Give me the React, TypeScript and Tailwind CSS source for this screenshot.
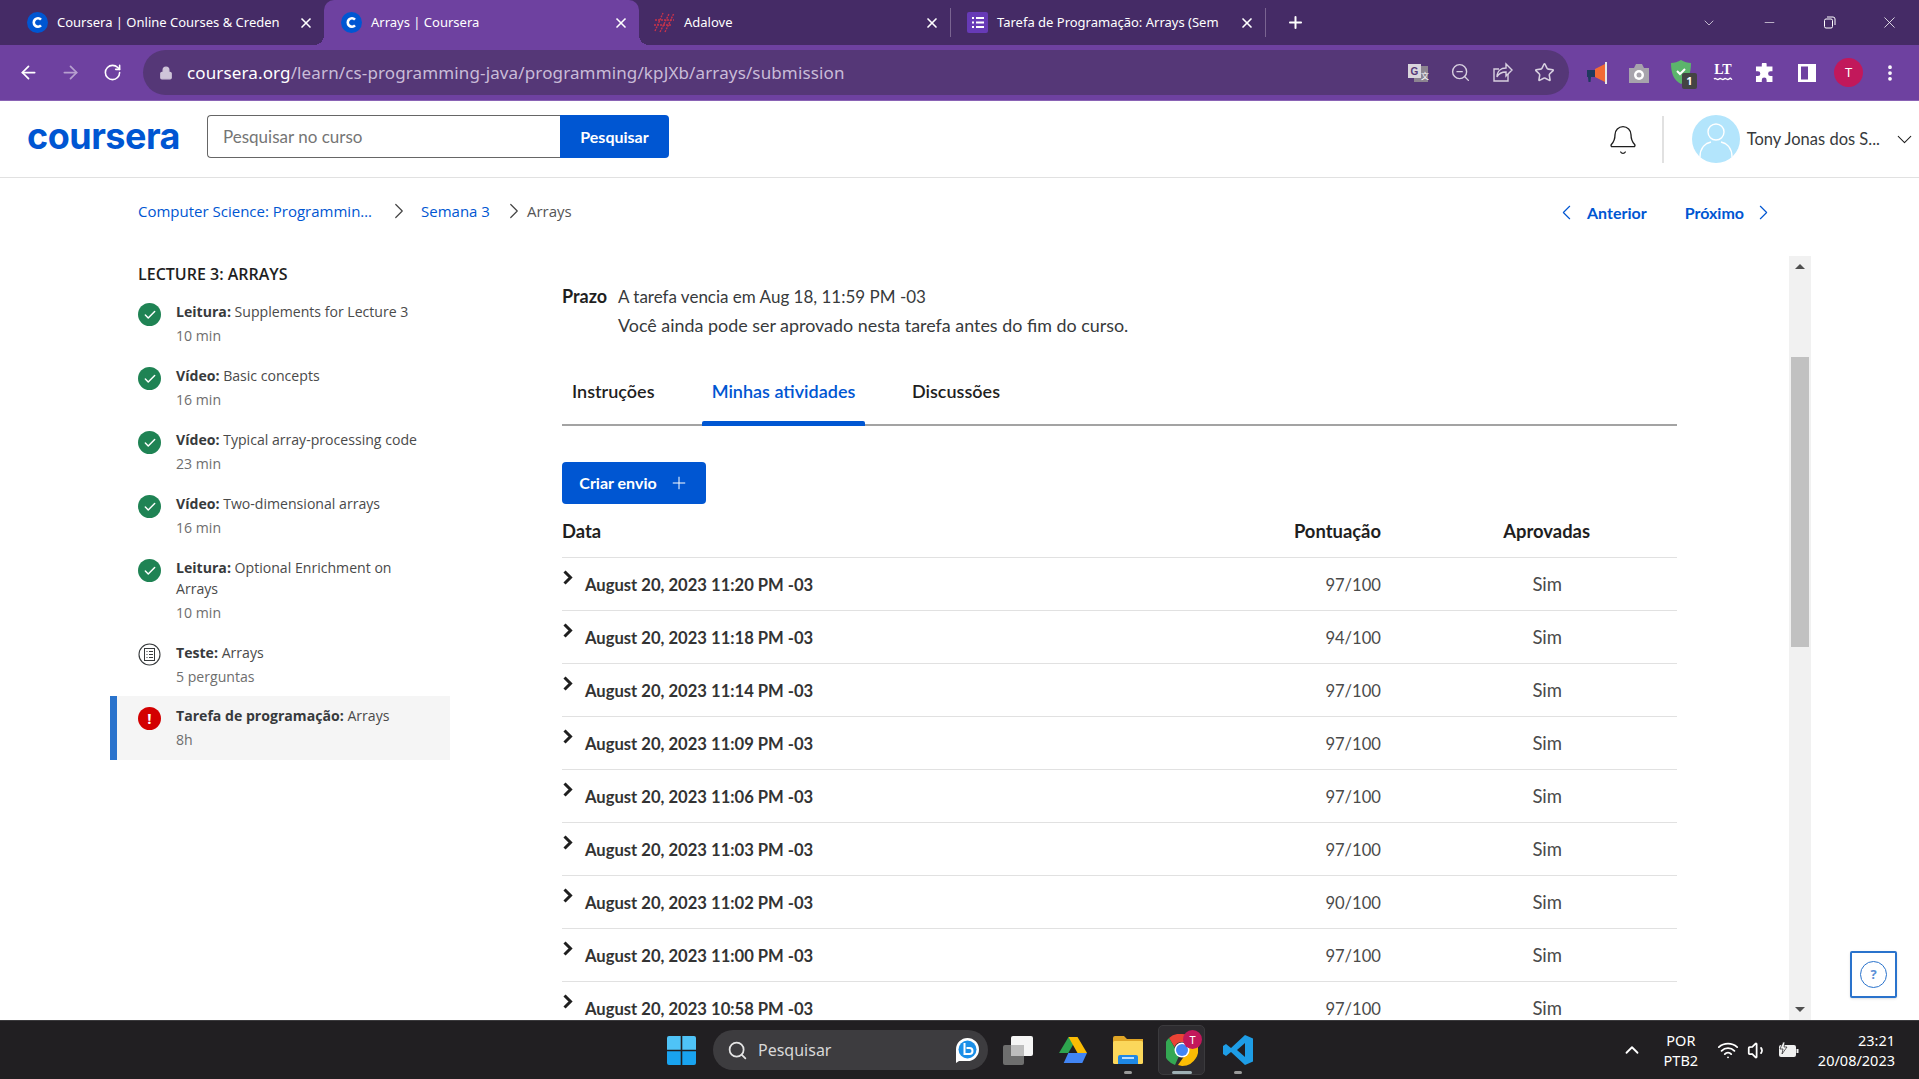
import {
  ArrowLeft,
  ArrowRight,
  Bell,
  Check,
  ChevronDown,
  ChevronLeft,
  ChevronRight,
  ChevronUp,
  EllipsisVertical,
  Lock,
  Minus,
  Plus,
  RotateCw,
  Search,
  Star,
  Volume1,
  Wifi,
  X,
  ZoomOut,
} from "lucide-react";

const chromeFont = "font-['Noto_Sans',sans-serif]";
const bodyFont = "font-['Lato',sans-serif]";
const navFont = "font-['Open_Sans',sans-serif]";

const tabs = [
  { title: "Coursera | Online Courses & Creden", w: "w-[324px] pl-[27px]", icon: "c" },
  { title: "Arrays | Coursera", w: "w-[315px] pl-[17px]", icon: "c", active: true },
  { title: "Adalove", w: "w-[312px] pl-[15px]", icon: "a" },
  { title: "Tarefa de Programação: Arrays (Sem", w: "w-[315px] pl-[16px]", icon: "f" },
];

const lessons = [
  { kind: "Leitura:", name: "Supplements for Lecture 3", meta: "10 min", status: "done" },
  { kind: "Vídeo:", name: "Basic concepts", meta: "16 min", status: "done" },
  { kind: "Vídeo:", name: "Typical array-processing code", meta: "23 min", status: "done" },
  { kind: "Vídeo:", name: "Two-dimensional arrays", meta: "16 min", status: "done" },
  { kind: "Leitura:", name: "Optional Enrichment on Arrays", meta: "10 min", status: "done" },
  { kind: "Teste:", name: "Arrays", meta: "5 perguntas", status: "quiz" },
  { kind: "Tarefa de programação:", name: "Arrays", meta: "8h", status: "error" },
];

const submissions = [
  { date: "August 20, 2023 11:20 PM -03", score: "97/100" },
  { date: "August 20, 2023 11:18 PM -03", score: "94/100" },
  { date: "August 20, 2023 11:14 PM -03", score: "97/100" },
  { date: "August 20, 2023 11:09 PM -03", score: "97/100" },
  { date: "August 20, 2023 11:06 PM -03", score: "97/100" },
  { date: "August 20, 2023 11:03 PM -03", score: "97/100" },
  { date: "August 20, 2023 11:02 PM -03", score: "90/100" },
  { date: "August 20, 2023 11:00 PM -03", score: "97/100" },
  { date: "August 20, 2023 10:58 PM -03", score: "97/100" },
];

function Favicon({ icon }: { icon: string }) {
  if (icon === "c") {
    return (
      <svg width="21" height="21" viewBox="0 0 21 21" className="shrink-0">
        <circle cx="10.5" cy="10.5" r="10.5" fill="#0056d2" />
        <path d="M14 7.6a4.2 4.2 0 1 0 0 5.8" fill="none" stroke="#fff" strokeWidth="2.6" />
      </svg>
    );
  }
  if (icon === "a") {
    return (
      <svg width="21" height="21" viewBox="0 0 21 21" className="shrink-0" stroke="#c9334a" strokeWidth="1.4" strokeDasharray="2 1">
        <path d="M1 19 9 1M6 20 15 2M11 20 20 1M1 8h19M0 13h18" fill="none" />
      </svg>
    );
  }
  return (
    <svg width="21" height="21" viewBox="0 0 21 21" className="shrink-0">
      <rect width="21" height="21" rx="2" fill="#673ab7" />
      <path d="M5 6h2M9 6h8M5 10.5h2M9 10.5h8M5 15h2M9 15h8" stroke="#fff" strokeWidth="2" />
    </svg>
  );
}

function BrowserTabs() {
  return (
    <div className={`flex h-[45px] shrink-0 bg-[#452b66] text-white text-[13px] ${chromeFont}`}>
      {tabs.map((tab, i) => (
        <div
          key={tab.title}
          className={`relative ${tab.w} flex items-center pr-[10px] gap-[9px] ${tab.active ? "bg-[#6e41a0] rounded-t-[10px]" : ""} ${i >= 2 ? "border-r border-[#7a6491] my-[8px] h-[29px]" : ""}`}
        >
          {tab.active && (
            <>
              <div className="absolute -left-[10px] bottom-0 w-[10px] h-[10px] bg-[radial-gradient(circle_at_0_0,transparent_10px,#6e41a0_10px)]" />
              <div className="absolute -right-[10px] bottom-0 w-[10px] h-[10px] bg-[radial-gradient(circle_at_100%_0,transparent_10px,#6e41a0_10px)]" />
            </>
          )}
          <Favicon icon={tab.icon} />
          <span className="flex-1 min-w-0 whitespace-nowrap">{tab.title}</span>
          <X size={16} strokeWidth={2.5} className="shrink-0" />
        </div>
      ))}
      <div className="flex items-center ml-[20px]">
        <Plus size={19} strokeWidth={2.5} />
      </div>
      <div className="ml-auto flex items-center">
        <div className="w-[60px] flex justify-center"><ChevronDown size={16} strokeWidth={1} /></div>
        <div className="w-[60px] flex justify-center"><Minus size={15} strokeWidth={1} /></div>
        <div className="w-[60px] flex justify-center">
          <svg width="13" height="13" viewBox="0 0 13 13" fill="none" stroke="#fff">
            <rect x="1.5" y="3" width="8" height="9" rx="1.5" />
            <path d="M4 1h6a2 2 0 0 1 2 2v6" />
          </svg>
        </div>
        <div className="w-[60px] flex justify-center"><X size={19} strokeWidth={1} /></div>
      </div>
    </div>
  );
}

function Toolbar() {
  return (
    <div className={`flex items-center h-[56px] shrink-0 bg-[#6e41a0] border-b border-[#8a63b5] text-white ${chromeFont}`}>
      <div className="flex items-center w-[143px] pl-[18px] gap-[22px]">
        <ArrowLeft size={21} />
        <ArrowRight size={21} className="opacity-50 -ml-[1px]" />
        <RotateCw size={19} />
      </div>
      <div className="flex items-center w-[1426px] h-[45px] rounded-full bg-[#553777] pl-[16px] pr-[14px]">
        <Lock size={14} fill="#cfc5d9" stroke="#cfc5d9" className="shrink-0" />
        <span className="ml-[14px] text-[17px] tracking-[0.13px] whitespace-nowrap">
          coursera.org<span className="text-[#c9bcd8]">/learn/cs-programming-java/programming/kpJXb/arrays/submission</span>
        </span>
        <div className="ml-auto flex items-center gap-[21px] text-[#d8d0e0]">
          <svg width="22" height="22" viewBox="0 0 22 22" className="shrink-0">
            <rect x="7" y="4" width="14" height="16" fill="#8c8490" />
            <rect x="1" y="2" width="13" height="14" fill="#d9d5dc" />
            <text x="3.5" y="13" fontSize="10" fontWeight="700" fill="#553777" fontFamily="'Liberation Sans',sans-serif">G</text>
            <text x="14" y="17" fontSize="8" fill="#fff" fontFamily="'Noto Sans CJK SC',sans-serif">文</text>
          </svg>
          <ZoomOut size={21} strokeWidth={1.6} />
          <svg width="21" height="21" viewBox="0 0 21 21" fill="none" stroke="currentColor" strokeWidth="1.4">
            <path d="M16 12v7H2V7h5" />
            <path d="M5 15c0-6 4-9 9-9V2l6 6-6 6v-4c-4 0-7 1-9 5z" />
          </svg>
          <Star size={21} strokeWidth={1.8} />
        </div>
      </div>
      <div className="relative flex-1 self-stretch flex items-center">
        <svg width="24" height="24" viewBox="0 0 24 24" className="ml-[16px]">
          <path d="M2 9h8v7H6l-.5 5H3.5L3 16H2z" fill="#1f3a5f" />
          <path d="M10 8l10-5v18l-10-5z" fill="#f26a35" />
          <rect x="20" y="1" width="2" height="22" fill="#e6e6e6" />
        </svg>
        <svg width="24" height="22" viewBox="0 0 24 22" className="ml-[18px]">
          <path d="M2 6h5l2-4h6l2 4h5v15H2z" fill="#a7a4ac" />
          <circle cx="12" cy="13" r="5" fill="#fff" />
          <circle cx="12" cy="13" r="2.5" fill="#a7a4ac" />
        </svg>
        <div className="relative w-[24px] h-[28px] ml-[19px]">
          <svg width="22" height="26" viewBox="0 0 22 26">
            <path d="M11 1c3 2 7 3 10 3 0 9-2 17-10 21C3 21 1 13 1 4c3 0 7-1 10-3z" fill="#5cb46c" />
            <path d="M7 12l3 3 5-5" fill="none" stroke="#fff" strokeWidth="2" />
          </svg>
          <span className="absolute left-[12px] top-[14px] w-[15px] h-[16px] rounded-[2px] bg-[#444] text-[11px] leading-[16px] font-bold text-center">1</span>
        </div>
        <div className="flex flex-col items-center leading-none ml-[19px] w-[20px]">
          <span className="text-[14px] font-bold font-['Liberation_Serif',serif] leading-[14px]">LT</span>
          <svg width="20" height="5" viewBox="0 0 20 5" fill="none" stroke="#fff" strokeWidth="1.5">
            <path d="M1 2c2-2 3 2 5 0s3 2 5 0 3 2 5 0 2 1 3 0" />
          </svg>
        </div>
        <svg width="20" height="20" viewBox="0 0 20 20" fill="#fff" className="ml-[22px]">
          <path d="M7 1a2.5 2.5 0 0 1 5 0v2h6v5h-2a2.5 2.5 0 0 0 0 5h2v6h-6v-2a2.5 2.5 0 0 0-5 0v2H1v-6h2a2.5 2.5 0 0 0 0-5H1V3h6z" transform="translate(0 .5) scale(.97)" />
        </svg>
        <svg width="18" height="18" viewBox="0 0 18 18" className="ml-[23px]">
          <rect width="18" height="18" fill="#fff" />
          <rect x="3" y="2.5" width="7" height="13" fill="#6e41a0" />
        </svg>
        <div className="ml-[18px] w-[29px] h-[29px] rounded-full bg-[#c2185b] flex items-center justify-center text-[13px]">T</div>
        <EllipsisVertical size={20} strokeWidth={2.5} className="ml-[17px]" />
      </div>
    </div>
  );
}

function SiteHeader() {
  return (
    <header className={`flex items-center h-[77px] shrink-0 bg-white border-b border-[#e1e1e1] ${bodyFont}`}>
      {/* logo is set as live text */}
      <div className="w-[207px] pl-[27px] text-[36px] font-bold tracking-[-0.5px] leading-none text-[#0056d2] font-['Inter',sans-serif] pb-[6px]">coursera</div>
      <div className="flex w-[462px] h-[43px] -mt-[5px]">
        <div className="flex-1 flex items-center pl-[15px] border border-[#666] border-r-0 rounded-l-[4px] text-[17px] text-[#757575]">Pesquisar no curso</div>
        <div className="w-[109px] flex items-center justify-center rounded-r-[4px] bg-[#0056d2] text-white text-[16px] font-bold">Pesquisar</div>
      </div>
      <div className="ml-auto flex items-center h-[47px]">
        <Bell size={32} strokeWidth={1} className="text-[#1f1f1f] mr-[23px] mt-[2px]" />
        <div className="w-[2px] h-full bg-[#e1e1e1]" />
        <svg width="48" height="48" viewBox="0 0 48 48" className="ml-[28px]">
          <circle cx="24" cy="24" r="24" fill="#b3e5fc" />
          <circle cx="24" cy="17" r="8" fill="none" stroke="#fff" strokeWidth="1.4" />
          <path d="M8 42c0-10 6-14 11-15M40 42c0-10-6-14-11-15" fill="none" stroke="#fff" strokeWidth="1.4" />
        </svg>
        <span className="ml-[7px] text-[16.5px] text-[#373a3c] whitespace-nowrap">Tony Jonas dos S...</span>
        <ChevronDown size={25} strokeWidth={1} className="ml-[12px] mr-[2px] text-[#1f1f1f]" />
      </div>
    </header>
  );
}

function Breadcrumbs() {
  return (
    <div className={`flex items-center h-[78px] shrink-0 pb-[12px] pl-[138px] pr-[143px] text-[15px] ${navFont}`}>
      <span className="text-[#0056d2]">Computer Science: Programmin…</span>
      <ChevronRight size={26} strokeWidth={1.1} className="ml-[14px] text-[#444]" />
      <span className="ml-[9px] text-[#0056d2]">Semana 3</span>
      <ChevronRight size={26} strokeWidth={1.1} className="ml-[11px] text-[#444]" />
      <span className="text-[#555]">Arrays</span>
      <div className={`ml-auto pt-[3px] flex items-center text-[#0056d2] font-bold text-[16px] ${bodyFont}`}>
        <ChevronLeft size={25} strokeWidth={1.1} />
        <span className="ml-[8px]">Anterior</span>
        <span className="ml-[38px]">Próximo</span>
        <ChevronRight size={25} strokeWidth={1.1} className="ml-[7px]" />
      </div>
    </div>
  );
}

function LessonIcon({ status }: { status: string }) {
  if (status === "done") {
    return (
      <div className="w-[23px] h-[23px] shrink-0 rounded-full bg-[#1f8354] flex items-center justify-center">
        <Check size={14} strokeWidth={2.5} className="text-white" />
      </div>
    );
  }
  if (status === "error") {
    return (
      <div className="w-[23px] h-[23px] shrink-0 rounded-full bg-[#d30001] flex items-center justify-center text-white text-[15px] font-bold">!</div>
    );
  }
  return (
    <svg width="23" height="23" viewBox="0 0 23 23" fill="none" stroke="#373a3c" className="shrink-0">
      <circle cx="11.5" cy="11.5" r="10.5" strokeWidth="1.1" />
      <rect x="6.5" y="5.5" width="10" height="12" />
      <path d="M8.5 8.5h1M11 8.5h4M8.5 11.5h1M11 11.5h4M8.5 14.5h1M11 14.5h4" />
    </svg>
  );
}

function Sidebar() {
  return (
    <aside className={`w-[562px] shrink-0 pl-[110px] ${navFont}`}>
      <h2 className="pl-[28px] mt-[6px] mb-[6px] text-[16px] leading-[24px] font-semibold text-[#1f1f1f]">LECTURE 3: ARRAYS</h2>
      <ul className="w-[340px]">
        {lessons.map((item) => (
          <li
            key={item.kind + item.name}
            className={`flex gap-[15px] pr-[30px] pt-[9px] ${item.status === "quiz" ? "pb-[9px]" : "pb-[10px]"} ${item.status === "error" ? "bg-[#f5f5f5] border-l-[7px] border-[#2a73cc] pl-[21px]" : "pl-[28px]"}`}
          >
            <div className={item.status === "quiz" ? "pt-[1px]" : "pt-[2px]"}><LessonIcon status={item.status} /></div>
            <div className="text-[14.1px] leading-[21px] text-[#4a4a4a]">
              <div><b className="font-bold text-[#373a3c]">{item.kind}</b> {item.name}</div>
              <div className="mt-[3px] text-[#6e6e6e]">{item.meta}</div>
            </div>
          </li>
        ))}
      </ul>
    </aside>
  );
}

function SubmissionTable() {
  return (
    <div className={`text-[#1f1f1f] ${bodyFont}`}>
      <div className="flex items-center h-[45px] border-b border-[#e1e1e1] text-[18.4px] font-bold pb-[6px]">
        <span>Data</span>
        <span className="ml-auto">Pontuação</span>
        <span className="w-[296px] pr-[87px] text-right">Aprovadas</span>
      </div>
      {submissions.map((row) => (
        <div key={row.date} className="flex items-center h-[53px] pt-[2px] border-b border-[#e1e1e1] text-[16.6px]">
          <svg width="10" height="15" viewBox="0 0 10 15" fill="none" stroke="#1f1f1f" strokeWidth="3" className="shrink-0 self-start mt-[10px] ml-[1px]">
            <path d="M1.5 1.5l6 6-6 6" />
          </svg>
          <span className="ml-[12px] font-bold text-[#333]">{row.date}</span>
          <span className="ml-auto text-[#4a4a4a]">{row.score}</span>
          <span className="w-[296px] pr-[115px] text-right text-[18.5px] text-[#4a4a4a]">Sim</span>
        </div>
      ))}
    </div>
  );
}

function MainPanel() {
  return (
    <main className={`w-[1115px] shrink-0 overflow-hidden pt-[26px] ${bodyFont}`}>
      <div className="flex text-[17.9px] leading-[29px] text-[#373a3c]">
        <b className="w-[56px] font-bold text-[#1f1f1f] text-[18px]">Prazo</b>
        <div>
          <div className="text-[17px]">A tarefa vencia em Aug 18, 11:59 PM -03</div>
          <div>Você ainda pode ser aprovado nesta tarefa antes do fim do curso.</div>
        </div>
      </div>
      <div className="flex h-[62px] mt-[24px] border-b-2 border-[#a3a3a3] text-[18px] font-semibold text-[#1f1f1f]">
        <div className="px-[10px] pt-[14px] w-[140px]">Instruções</div>
        <div className="relative w-[163px] pt-[14px] text-center text-[#0056d2]">
          Minhas atividades
          <div className="absolute left-0 right-0 -bottom-[2px] h-[5px] rounded-t-[2px] bg-[#0056d2]" />
        </div>
        <div className="pl-[47px] pt-[14px]">Discussões</div>
      </div>
      <button className="flex items-center justify-center gap-[12px] mt-[36px] w-[144px] h-[42px] rounded-[4px] bg-[#0056d2] text-white text-[16px] font-bold">
        Criar envio
        <Plus size={20} strokeWidth={1.2} />
      </button>
      <div className="mt-[9px]"><SubmissionTable /></div>
    </main>
  );
}

function Scrollbar() {
  return (
    <div className="w-[22px] ml-[112px] shrink-0 flex flex-col bg-[#f1f1f1]">
      <div className="h-[21px] flex items-center justify-center">
        <div className="w-0 h-0 border-x-[5px] border-x-transparent border-b-[5px] border-b-[#505050]" />
      </div>
      <div className="h-[290px] mt-[80px] mx-[2px] bg-[#c1c1c1]" />
      <div className="mt-auto h-[21px] flex items-center justify-center">
        <div className="w-0 h-0 border-x-[5px] border-x-transparent border-t-[5px] border-t-[#505050]" />
      </div>
    </div>
  );
}

function Taskbar() {
  return (
    <div className={`relative flex items-center h-[59px] shrink-0 bg-[#211f22] border-t border-[#3b3a3d] text-white ${chromeFont}`}>
      <div className="flex items-center ml-[667px]">
        <svg width="29" height="29" viewBox="0 0 29 29">
          <path d="M0 2a2 2 0 0 1 2-2h11.7v13.7H0zM15.3 0H27a2 2 0 0 1 2 2v11.7H15.3z" fill="#4fc3f7" />
          <path d="M0 15.3h13.7V29H2a2 2 0 0 1-2-2zM15.3 15.3H29V27a2 2 0 0 1-2 2H15.3z" fill="#19a3f0" />
        </svg>
        <div className="flex items-center ml-[17px] w-[275px] h-[40px] rounded-full bg-[#3d3c3f] pl-[14px] pr-[8px]">
          <Search size={21} className="text-[#e5e5e5]" />
          <span className="ml-[10px] text-[16px] text-[#d8d8d8]">Pesquisar</span>
          <svg width="25" height="27" viewBox="0 0 25 27" className="ml-auto">
            <path d="M12.5 1a11.5 11.5 0 0 1 0 23H4l-3 2V12.5A11.5 11.5 0 0 1 12.5 1z" fill="#fff" />
            <circle cx="12.5" cy="12.5" r="9" fill="#1b8fe8" />
            <path d="M9.5 6v11l5 0a3 3 0 0 0 0-6h-3" fill="none" stroke="#fff" strokeWidth="2" />
          </svg>
        </div>
        <svg width="30" height="29" viewBox="0 0 30 29" className="ml-[15px]">
          <rect y="9" width="21" height="20" rx="2" fill="#6e6e6e" />
          <rect x="8" width="22" height="20" rx="2" fill="#f5f5f5" />
          <rect x="8" y="9" width="13" height="11" fill="#bdbdbd" />
        </svg>
        <svg width="28" height="26" viewBox="0 0 28 26" className="ml-[26px]">
          <path d="M9.5 0h9l-9.2 16H0z" fill="#2da44e" />
          <path d="M18.5 0 28 16h-9.5L9.5 0z" fill="#fbbc04" />
          <path d="M4.7 26 9.3 16H28l-4.7 10z" fill="#4285f4" />
        </svg>
        <svg width="30" height="28" viewBox="0 0 30 28" className="ml-[26px]">
          <path d="M0 2a2 2 0 0 1 2-2h9l3 3h16v4H0z" fill="#e0a526" />
          <rect y="5" width="30" height="23" rx="1.5" fill="#fbd75b" />
          <path d="M5 28v-7a2 2 0 0 1 2-2h16a2 2 0 0 1 2 2v7z" fill="#1e88e5" />
          <rect x="9" y="21" width="12" height="2" fill="#bbdefb" />
        </svg>
        <div className="relative flex items-center justify-center ml-[15px] w-[47px] h-[50px] rounded-[5px] bg-[#2e2c30] border border-[#3b3a3d]">
          <svg width="32" height="32" viewBox="0 0 32 32">
            <path d="M16 0a16 16 0 0 1 14 8H16a8 8 0 0 0-7.5 5L3 4a16 16 0 0 1 13-4z" fill="#ea4335" />
            <path d="M3 4l7 12a6 6 0 0 0 3 6l-4 9A16 16 0 0 1 3 4z" fill="#34a853" />
            <path d="M30 8a16 16 0 0 1-14 24l-4-1 7-10a8 8 0 0 0 3-8 8 8 0 0 0-2-5z" fill="#fbbc04" />
            <circle cx="16" cy="16" r="7.5" fill="#fff" />
            <circle cx="16" cy="16" r="6" fill="#4285f4" />
          </svg>
          <span className="absolute right-[2px] top-[4px] w-[19px] h-[19px] rounded-full bg-[#c2185b] text-[11px] leading-[19px] text-center">T</span>
        </div>
        <svg width="30" height="30" viewBox="0 0 30 30" className="ml-[18px]">
          <path d="M22 0 30 3.5v23L22 30 8 17 3 21l-3-2V11l3-2 5 4z" fill="#1e9de6" />
          <path d="M22 8 14 15l8 7z" fill="#211f22" />
        </svg>
      </div>
      {/* running indicators */}
      <div className="absolute left-[1124px] bottom-[5px] w-[8px] h-[3px] rounded-full bg-[#9a9a9a]" />
      <div className="absolute left-[1172px] bottom-[5px] w-[20px] h-[3px] rounded-full bg-[#9fb0b5]" />
      <div className="absolute left-[1234px] bottom-[5px] w-[8px] h-[3px] rounded-full bg-[#9a9a9a]" />
      <div className="ml-auto flex items-center pr-[24px] text-[14.5px] leading-[20px]">
        <ChevronUp size={22} strokeWidth={2} />
        <div className="ml-[20px] w-[36px] text-center">
          <div>POR</div>
          <div>PTB2</div>
        </div>
        <Wifi size={22} className="ml-[18px]" />
        <Volume1 size={21} className="ml-[8px]" />
        <svg width="21" height="16" viewBox="0 0 21 16" className="ml-[10px]">
          <rect x="1" y="3" width="17" height="12" rx="2" fill="#f0f0f0" />
          <rect x="18.5" y="7" width="2" height="4" fill="#f0f0f0" />
          <path d="M5 0 2 7h3l-1 5 5-7H6l1-5z" fill="#f0f0f0" stroke="#211f22" strokeWidth=".7" />
        </svg>
        <div className="ml-[19px] text-right">
          <div>23:21</div>
          <div>20/08/2023</div>
        </div>
      </div>
    </div>
  );
}

export default function App() {
  return (
    <div className="relative flex flex-col h-screen overflow-hidden bg-white">
      <BrowserTabs />
      <Toolbar />
      <SiteHeader />
      <Breadcrumbs />
      <div className="flex flex-1 min-h-0">
        <Sidebar />
        <MainPanel />
        <Scrollbar />
      </div>
      <Taskbar />
      {/* floating help button */}
      <div className="absolute left-[1850px] top-[951px] w-[47px] h-[47px] flex items-center justify-center rounded-[2px] bg-white border-2 border-[#2a73cc] shadow">
        <div className="w-[27px] h-[27px] rounded-full border border-[#2a73cc] flex items-center justify-center text-[13px] font-bold text-[#5a8fd6] font-['Open_Sans',sans-serif]">?</div>
      </div>
    </div>
  );
}
